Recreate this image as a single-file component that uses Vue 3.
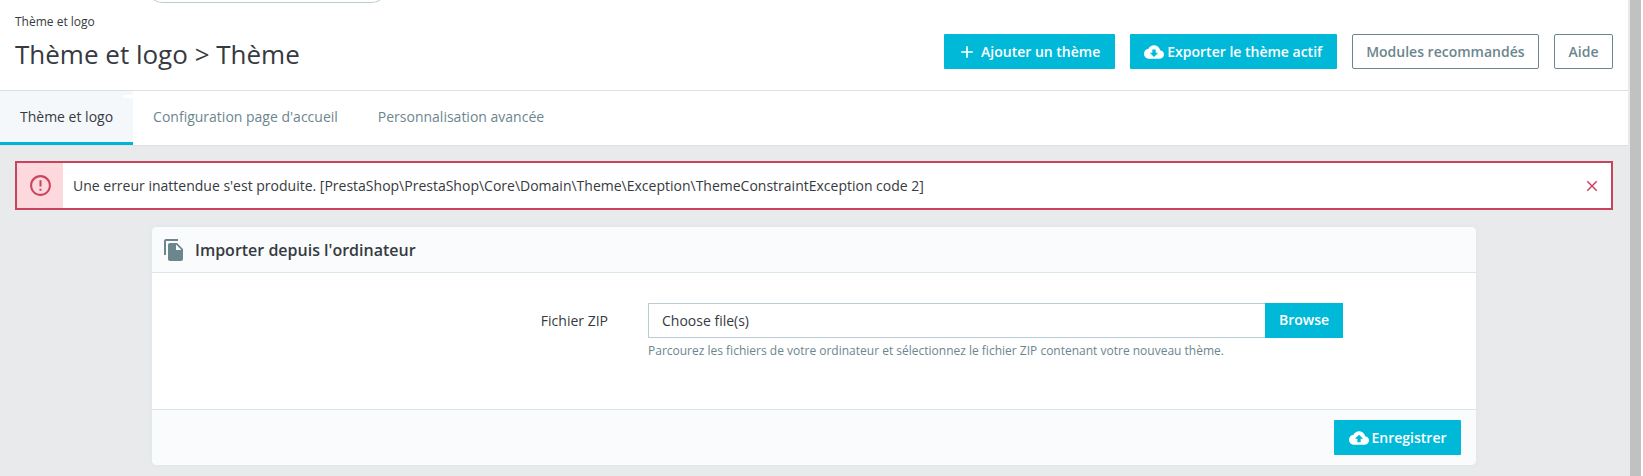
<script setup>
const icons = {
  down: 'M19.35 10.04C18.67 6.59 15.64 4 12 4 9.11 4 6.6 5.64 5.35 8.04 2.34 8.36 0 10.91 0 14c0 3.31 2.69 6 6 6h13c2.76 0 5-2.24 5-5 0-2.64-2.05-4.78-4.65-4.96zM17 13l-5 5-5-5h3V9h4v4h3z',
  up: 'M19.35 10.04C18.67 6.59 15.64 4 12 4 9.11 4 6.6 5.64 5.35 8.04 2.34 8.36 0 10.91 0 14c0 3.31 2.69 6 6 6h13c2.76 0 5-2.24 5-5 0-2.64-2.05-4.78-4.65-4.96zM14 13v4h-4v-4H7l5-5 5 5h-3z',
  add: 'M19 13h-6v6h-2v-6H5v-2h6V5h2v6h6v2z',
  close: 'M19 6.41L17.59 5 12 10.59 6.41 5 5 6.41 10.59 12 5 17.59 6.41 19 12 13.41 17.59 19 19 17.59 13.41 12z',
  error: 'M11 15h2v2h-2zm0-8h2v6h-2zm.99-5C6.47 2 2 6.48 2 12s4.47 10 9.99 10C17.52 22 22 17.52 22 12S17.52 2 11.99 2zM12 20c-4.42 0-8-3.58-8-8s3.58-8 8-8 8 3.58 8 8-3.58 8-8 8z',
  copy: 'M16 1H4c-1.1 0-2 .9-2 2v14h2V3h12V1zm-1 4l6 6v10c0 1.1-.9 2-2 2H7.99C6.89 23 6 22.1 6 21l.01-14c0-1.1.89-2 1.99-2h7zm-1 7h5.5L14 6.5V12z'
}
const tabs = [
  { label: 'Thème et logo', active: true },
  { label: 'Configuration page d\'accueil' },
  { label: 'Personnalisation avancée' }
]
</script>

<template>
  <div class="page">
    <div class="main">
      <header class="head">
        <div class="search-edge"></div>
        <div class="crumb">Thème et logo</div>
        <div class="title-row">
          <h1 class="title">Thème et logo &gt; Thème</h1>
          <div class="actions">
            <a class="btn primary"><svg class="ic add" viewBox="0 0 24 24"><path :d="icons.add" /></svg>Ajouter un thème</a>
            <a class="btn primary exp"><svg class="ic cloud" viewBox="0 0 24 24"><path :d="icons.down" /></svg>Exporter le thème actif</a>
            <a class="btn outline">Modules recommandés</a>
            <a class="btn outline">Aide</a>
          </div>
        </div>
      </header>

      <nav class="tabs">
        <a v-for="t in tabs" :key="t.label" class="tab" :class="{ active: t.active }">{{ t.label }}<i v-if="t.active" class="tab-spot"></i></a>
      </nav>

      <section class="content">
        <div class="alert">
          <div class="alert-icon"><svg viewBox="0 0 24 24"><path :d="icons.error" /></svg></div>
          <div class="alert-text">Une erreur inattendue s'est produite. [PrestaShop\PrestaShop\Core\Domain\Theme\Exception\ThemeConstraintException code 2]</div>
          <svg class="alert-close" viewBox="0 0 24 24"><path :d="icons.close" /></svg>
        </div>

        <div class="card">
          <div class="card-head">
            <svg class="copy" viewBox="0 0 24 24"><path :d="icons.copy" /></svg>
            <span>Importer depuis l'ordinateur</span>
          </div>
          <div class="card-body">
            <label class="field-label">Fichier ZIP</label>
            <div class="field">
              <div class="file">
                <div class="file-input">Choose file(s)</div>
                <div class="browse">Browse</div>
              </div>
              <p class="hint">Parcourez les fichiers de votre ordinateur et sélectionnez le fichier ZIP contenant votre nouveau thème.</p>
            </div>
          </div>
          <div class="card-foot">
            <a class="btn primary save"><svg class="ic cloud" viewBox="0 0 24 24"><path :d="icons.up" /></svg>Enregistrer</a>
          </div>
        </div>
      </section>
    </div>
    <div class="scrollbar"></div>
  </div>
</template>

<style>
html, body { margin: 0; padding: 0; overflow: hidden; }
</style>

<style scoped>
.page {
  display: flex;
  width: 1643px;
  height: 476px;
  overflow: hidden;
  background: #e8eaec;
  font-family: "Open Sans", "Noto Sans", sans-serif;
  font-size: 14px;
  color: #363a41;
}
.main { width: 1628px; flex: none; display: flex; flex-direction: column; }
.scrollbar { width: 11px; margin-left: 2px; background: #c1c1c1; border-right: 2px solid #fff; }

.head { background: #fff; height: 90px; box-sizing: border-box; padding: 0 15px; overflow: hidden; }
.search-edge {
  width: 238px; height: 20px; margin: -17px 0 0 133px; box-sizing: border-box;
  border: 1px solid #bbcdd2; border-top: 0; border-radius: 0 0 14px 14px;
}
.crumb { margin-top: 10px; font-size: 12px; line-height: 18px; color: #363a41; }
.title-row { display: flex; justify-content: space-between; align-items: flex-start; margin-top: 3px; }
.title { margin: 2px 0 0; font-size: 26px; font-weight: 400; line-height: 36px; color: #363a41; }
.actions { display: flex; gap: 15px; }

.btn {
  display: inline-flex; align-items: center; box-sizing: border-box; height: 35px;
  padding: 0 14.5px; font-size: 14px; font-weight: 600; border-radius: 1px;
}
.primary { background: #00b9d9; color: #fff; }
.outline { background: #fff; color: #6c868e; border: 1px solid #6c868e; border-radius: 2px; padding: 0 13.5px; }
.ic { fill: #fff; display: block; flex: none; }
.add { width: 20px; height: 20px; margin: 0 4px 0 -1px; }
.cloud { width: 20px; height: 20px; margin-right: 3px; }

.tabs { display: flex; height: 56px; box-sizing: border-box; background: #fff; border-top: 1px solid #dfdfdf; border-bottom: 1px solid #dfdfdf; }
.tab { position: relative; display: flex; align-items: center; padding: 0 20px; font-size: 14px; color: #6c868e; box-sizing: border-box; height: 54px; border-bottom: 3px solid transparent; }
.tab.active { color: #363a41; background: #f4f8fb; border-bottom-color: #00b4d8; }
.tab-spot { position: absolute; right: 0; top: 4px; width: 10px; height: 3px; background: #fff; border-radius: 2px 0 0 2px; }

.content { flex: 1; padding: 15px 15px 0; }
.alert {
  display: flex; align-items: center; box-sizing: border-box; height: 49px;
  background: #fff; border: 2px solid #c9435c;
}
.alert-icon { width: 46px; height: 45px; background: #fdd9de; display: flex; align-items: center; justify-content: center; flex: none; }
.alert-icon svg { width: 25px; height: 25px; fill: #cc4560; }
.alert-text { flex: 1; padding-left: 10px; color: #363a41; font-size: 14px; }
.alert-close { width: 18px; height: 18px; fill: #cc4560; margin-right: 10px; flex: none; }

.card {
  margin: 17px 0 0 137px; width: 1324px; height: 238px; box-sizing: border-box;
  background: #fff; border-radius: 5px; box-shadow: 0 0 4px 0 #dbe6e9;
  display: flex; flex-direction: column; overflow: hidden;
}
.card-head {
  height: 46px; box-sizing: border-box; background: #fafbfc; border-bottom: 1px solid #dbe6e9;
  display: flex; align-items: center; padding-left: 10px; font-size: 16px; font-weight: 600; color: #363a41;
}
.copy { width: 24px; height: 24px; fill: #6c868e; margin-right: 9px; }
.card-body { flex: 1; display: flex; padding-top: 30px; }
.field-label { width: 456px; text-align: right; line-height: 35px; font-size: 14px; color: #363a41; }
.field { margin-left: 40px; width: 695px; }
.file { display: flex; height: 35px; }
.file-input { flex: 1; box-sizing: border-box; border: 1px solid #bbcdd2; border-right: 0; padding-left: 13px; line-height: 33px; color: #363a41; }
.browse { width: 78px; background: #00b9d9; color: #fff; font-weight: 600; text-align: center; line-height: 33px; }
.hint { margin: 4px 0 0; font-size: 12px; line-height: 18px; color: #6c868e; }
.card-foot { height: 56px; box-sizing: border-box; background: #fafbfc; border-top: 1px solid #dbe6e9; display: flex; justify-content: flex-end; align-items: flex-start; padding: 10px 15px 0 0; }
</style>
